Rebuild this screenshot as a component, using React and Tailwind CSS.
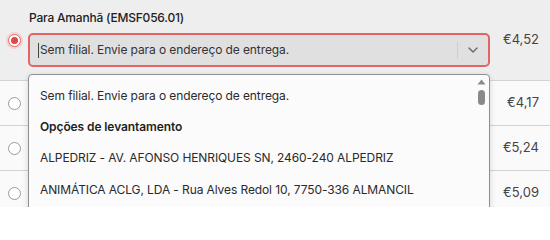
import React from 'react';
import { ChevronDown } from 'lucide-react';

const rows = [
  { price: '€4,17' },
  { price: '€5,24' },
  { price: '€5,09' },
];

const options = [
  { label: 'Sem filial. Envie para o endereço de entrega.' },
  { label: 'Opções de levantamento', header: true },
  { label: 'ALPEDRIZ - AV. AFONSO HENRIQUES SN, 2460-240 ALPEDRIZ', tall: true },
  { label: 'ANIMÁTICA ACLG, LDA - Rua Alves Redol 10, 7750-336 ALMANCIL' },
];

const Radio = ({ checked }) => (
  <span
    className={
      checked
        ? 'w-[13px] h-[13px] rounded-full border border-[#e26a6a] bg-white flex items-center justify-center shadow-[0_0_0_2px_#f6cfcf]'
        : 'w-[13px] h-[13px] rounded-full border border-[#9b9b9b] bg-white'
    }
  >
    {checked && <span className="w-[7px] h-[7px] rounded-full bg-[#e04848]" />}
  </span>
);

const App = () => {
  return (
    <div
      className="relative w-[550px] h-[207px] overflow-hidden bg-[#fbfafb] text-[#222]"
      style={{ fontFamily: 'Inter, "Noto Sans", sans-serif' }}
    >
      {/* Selected shipping option */}
      <div className="bg-[#efeeef] border-b border-[#d4d3d4] h-[81px] pt-[10px]">
        <div className="pl-[29px] text-[12px] leading-[16px] font-medium tracking-[-0.2px]">Para Amanhã (EMSF056.01)</div>
        <div className="flex mt-[7px]">
          <div className="w-[28px] flex justify-center pt-[1px] pl-[1px]">
            <Radio checked />
          </div>
          <div className="w-[462px] h-[34px] rounded-[5px] border-2 border-[#e06666] bg-[#e1e0e1] flex items-center">
            <div className="flex-1 pl-[8px] text-[12px] tracking-[-0.1px] text-[#333] flex items-center">
              <span className="w-px h-[15px] bg-[#444] mr-[1px]" />
              Sem filial. Envie para o endereço de entrega.
            </div>
            <span className="w-px h-[17px] bg-[#cfcecf]" />
            <div className="w-[30px] flex justify-center text-[#666]">
              <ChevronDown size={16} strokeWidth={2} />
            </div>
          </div>
          <div className="flex-1 text-right pr-[11px] text-[13px] leading-[16px] text-[#444] -mt-[2px]">€4,52</div>
        </div>
      </div>

      {/* Other shipping options */}
      {rows.map((row) => (
        <div key={row.price} className="flex items-center h-[45px] border-b border-[#d4d3d4]">
          <div className="w-[28px] flex justify-center pl-[1px]">
            <Radio />
          </div>
          <div className="flex-1" />
          <div className="pr-[11px] text-[13px] text-[#444]">{row.price}</div>
        </div>
      ))}

      {/* Open dropdown menu */}
      <div className="absolute left-[28px] top-[74px] w-[462px] h-[140px] bg-[#fcfbfc] border border-[#8e8e8e] rounded-t-[4px] shadow-[0_2px_6px_rgba(0,0,0,0.15)]">
        <div className="pt-[5px]">
          {options.map((o) => (
            <div
              key={o.label}
              className={
                o.header
                  ? 'h-[31px] flex items-center pl-[11px] text-[12px] tracking-[-0.1px] font-semibold text-[#1f1f1f]'
                  : o.tall
                  ? 'h-[32px] flex items-center pl-[11px] text-[12px] tracking-[-0.1px] text-[#2a2a2a]'
                  : 'h-[31px] flex items-center pl-[11px] text-[12px] tracking-[-0.1px] text-[#2a2a2a]'
              }
            >
              {o.label}
            </div>
          ))}
        </div>
        <div className="absolute right-[3px] top-[4px] w-[9px] flex flex-col items-center">
          <svg width="9" height="6" viewBox="0 0 9 6">
            <path d="M4.5 0.5 L8.5 5.5 L0.5 5.5 Z" fill="#8a8a8a" />
          </svg>
          <span className="mt-[5px] w-[7px] h-[15px] rounded-full bg-[#8a8a8a]" />
        </div>
      </div>
    </div>
  );
};

export default App;
